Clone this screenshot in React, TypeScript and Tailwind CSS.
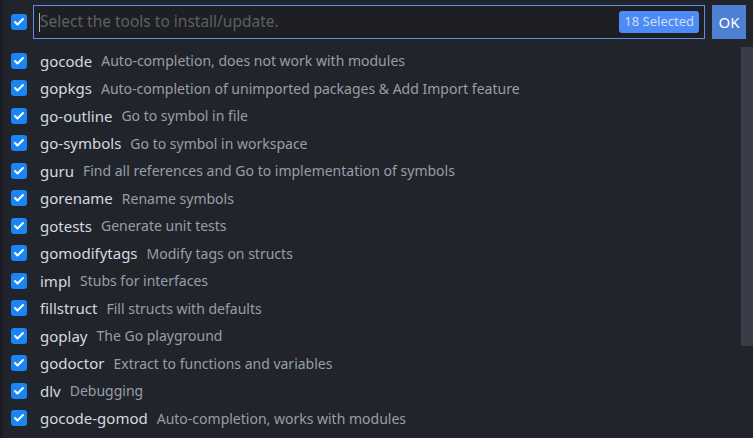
import { Check } from "lucide-react";

const tools: [string, string][] = [
  ["gocode", "Auto-completion, does not work with modules"],
  ["gopkgs", "Auto-completion of unimported packages & Add Import feature"],
  ["go-outline", "Go to symbol in file"],
  ["go-symbols", "Go to symbol in workspace"],
  ["guru", "Find all references and Go to implementation of symbols"],
  ["gorename", "Rename symbols"],
  ["gotests", "Generate unit tests"],
  ["gomodifytags", "Modify tags on structs"],
  ["impl", "Stubs for interfaces"],
  ["fillstruct", "Fill structs with defaults"],
  ["goplay", "The Go playground"],
  ["godoctor", "Extract to functions and variables"],
  ["dlv", "Debugging"],
  ["gocode-gomod", "Auto-completion, works with modules"],
];

function Box() {
  return (
    <span className="flex h-4 w-4 shrink-0 items-center justify-center rounded-[3px] bg-[#1a85f5]">
      <Check className="h-3 w-3 text-white" strokeWidth={4} />
    </span>
  );
}

export default function App() {
  return (
    <div
      className="flex h-[438px] w-[753px] overflow-hidden bg-[#21252b]"
      style={{ fontFamily: '"Noto Sans", "Open Sans", sans-serif' }}
    >
      <div className="w-[3px] shrink-0 bg-[#1a1c21]" />
      <div className="flex min-w-0 flex-1 flex-col">
        <div className="flex items-center pt-[5px] pl-[8px] pr-[7px]">
          <Box />
          <div className="ml-[6px] flex h-[34px] flex-1 items-center border border-[#5b8ee8] bg-[#1d1f23] pl-[5px] pr-[5px]">
            <span className="h-[19px] w-px bg-[#b0b4bb]" />
            <span className="flex-1 text-[15.5px] text-[#5c5f66]">Select the tools to install/update.</span>
            <span className="flex h-[22px] items-center rounded-[3px] bg-[#4d8cf7] px-[5px] text-[13px] text-[#cfdcf5]">
              18 Selected
            </span>
          </div>
          <button className="ml-[7px] flex h-[34px] w-[34px] items-center justify-center bg-[#4d7fd3] text-[15px] text-white">
            OK
          </button>
        </div>
        <div className="mt-[8px] flex flex-1">
          <ul className="flex-1">
            {tools.map(([name, desc]) => (
              <li key={name} className="flex h-[27.5px] items-center pl-[8px]">
                <Box />
                <span className="ml-[13px] text-[15px] text-[#d5d9e0]">{name}</span>
                <span className="ml-[9px] text-[14px] text-[#989ea8]">{desc}</span>
              </li>
            ))}
          </ul>
          <div className="w-[12px] shrink-0">
            <div className="h-[299px] bg-[#383d48]" />
          </div>
        </div>
      </div>
    </div>
  );
}
